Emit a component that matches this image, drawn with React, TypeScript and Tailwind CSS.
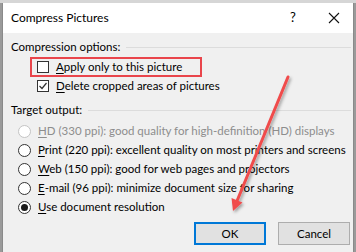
import React from 'react';

const font = { fontFamily: 'Lato, "Noto Sans", "Liberation Sans", sans-serif' };

function U({ c }: { c: string }) {
  return <span className="underline underline-offset-2 decoration-1">{c}</span>;
}

function CheckBox({ checked }: { checked?: boolean }) {
  return (
    <div className="w-[12px] h-[12px] bg-white border border-[#333] flex items-center justify-center shrink-0">
      {checked && (
        <svg width="10" height="10" viewBox="0 0 10 10">
          <path d="M1.5 5 L4 7.5 L8.5 2" fill="none" stroke="#333" strokeWidth="1.2" />
        </svg>
      )}
    </div>
  );
}

function Radio({ selected, disabled }: { selected?: boolean; disabled?: boolean }) {
  return (
    <div
      className={`w-[13px] h-[13px] rounded-full bg-white border flex items-center justify-center shrink-0 ${
        disabled ? 'border-[#c4c4c4]' : 'border-[#333]'
      }`}
    >
      {selected && <div className="w-[7px] h-[7px] rounded-full bg-[#1a1a1a]" />}
    </div>
  );
}

function GroupLabel({ text }: { text: string }) {
  return (
    <div className="flex items-center h-[16px]">
      <span className="pr-[6px]">{text}</span>
      <div className="flex-1 h-px bg-[#dcdcdc] mr-[2px]" />
    </div>
  );
}

const radios = [
  { key: 'H', rest: 'D (330 ppi): good quality for high-definition (HD) displays', disabled: true },
  { key: 'P', rest: 'rint (220 ppi): excellent quality on most printers and screens' },
  { key: 'W', rest: 'eb (150 ppi): good for web pages and projectors' },
  { key: 'E', rest: '-mail (96 ppi): minimize document size for sharing' },
  { key: 'U', rest: 'se document resolution', selected: true },
];

export default function App() {
  return (
    <div className="w-[356px] h-[252px] relative overflow-hidden bg-[#9a9a9a] text-[11.5px] text-black" style={font}>
      <div className="h-[3px] bg-[#d6d6d6]" />
      <div className="absolute left-[2px] right-[2px] top-[3px] bottom-0 border-l border-r border-[#8a8a8a] flex flex-col">
        {/* Title bar */}
        <div className="h-[30px] bg-white flex items-center pl-[8px]">
          <span className="flex-1 text-[12px]">Compress Pictures</span>
          <span className="w-[20px] text-center text-[13px] mr-[25px]">?</span>
          <svg width="12" height="12" viewBox="0 0 12 12" className="mr-[13px]">
            <path d="M1 1 L11 11 M11 1 L1 11" stroke="#111" strokeWidth="1.1" />
          </svg>
        </div>

        {/* Body */}
        <div className="flex-1 bg-[#f0f0f0] pl-[8px] pt-[6px] flex flex-col leading-[16px]">
          <GroupLabel text="Compression options:" />
          <div className="ml-[19px] mt-[2px] w-[172px] h-[20px] border-2 border-[#e9454b] flex items-center gap-[7px] pl-[5px]">
            <CheckBox />
            <span>
              <U c="A" />pply only to this picture
            </span>
          </div>
          <div className="ml-[26px] mt-[1px] h-[16px] flex items-center gap-[7px]">
            <CheckBox checked />
            <span>
              <U c="D" />elete cropped areas of pictures
            </span>
          </div>

          <div className="mt-[8px]">
            <GroupLabel text="Target output:" />
          </div>
          <div className="mt-[5px] flex flex-col gap-[3px] ml-[7px]">
            {radios.map((r) => (
              <div key={r.key} className="h-[16px] flex items-center gap-[7px]">
                <Radio selected={r.selected} disabled={r.disabled} />
                <span className={`whitespace-nowrap ${r.disabled ? 'text-[#8d8d8d]' : ''}`}>
                  <U c={r.key} />
                  {r.rest}
                </span>
              </div>
            ))}
          </div>

          <div className="mt-[7px] flex justify-end gap-[12px] pr-[3px]">
            <button className="w-[72px] h-[23px] bg-[#e1e1e1] border-2 border-[#0078d7]">OK</button>
            <button className="w-[72px] h-[23px] bg-[#e1e1e1] border border-[#adadad]">Cancel</button>
          </div>
        </div>
      </div>

      {/* Annotation arrow */}
      <svg className="absolute left-0 top-0" width="356" height="252" viewBox="0 0 356 252">
        <defs>
          <filter id="sh" x="-50%" y="-50%" width="200%" height="200%">
            <feDropShadow dx="1.5" dy="2" stdDeviation="1.5" floodColor="#000" floodOpacity="0.35" />
          </filter>
        </defs>
        <g filter="url(#sh)">
          <line x1="288" y1="77" x2="237" y2="201" stroke="#f04b4b" strokeWidth="3" strokeLinecap="round" />
          <polygon points="233,211 231.5,198 242.5,202.5" fill="#f04b4b" />
        </g>
      </svg>
    </div>
  );
}
